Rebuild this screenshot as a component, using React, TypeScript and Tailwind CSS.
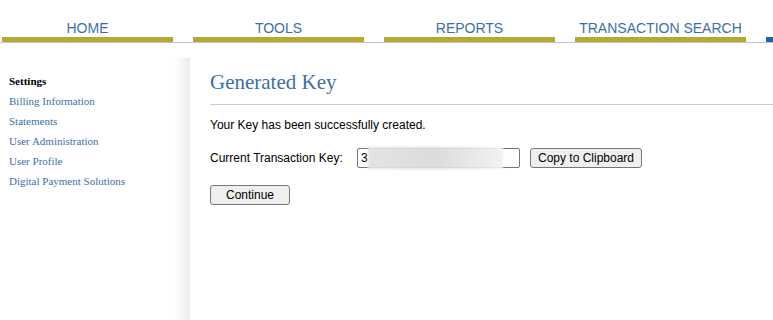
import React from 'react'

const tabs = ['HOME', 'TOOLS', 'REPORTS', 'TRANSACTION SEARCH']

const sideLinks = [
  'Billing Information',
  'Statements',
  'User Administration',
  'User Profile',
  'Digital Payment Solutions',
]

export default function App() {
  return (
    <div className="w-[773px] h-[320px] overflow-hidden bg-white font-['Liberation_Sans',Arial,sans-serif]">
      {/* top nav */}
      <div className="h-[58px]">
        <div className="flex gap-[20px] pl-[2px] pt-[19px] border-b border-[#c3c3cf]">
          {tabs.map((t) => (
            <div key={t} className="w-[171px] shrink-0">
              <div className="h-[18px] text-center text-[14px] leading-[18px] text-[#3d6fa8]">{t}</div>
              <div className="h-[5px] bg-[#b6a830]" />
            </div>
          ))}
          <div className="w-[171px] shrink-0 flex flex-col">
            <div className="h-[18px]" />
            <div className="h-[5px] bg-[#20689c]" />
          </div>
        </div>
      </div>

      <div className="flex">
        {/* sidebar */}
        <div className="relative w-[190px] h-[262px] shrink-0 bg-gradient-to-r from-white from-[92%] to-[#ececec] pl-[9px] pt-[15px] font-['Liberation_Serif',serif] text-[11px]">
          <div className="h-[20px] leading-[16px] font-bold text-black">Settings</div>
          {sideLinks.map((l) => (
            <div key={l} className="h-[20px] leading-[16px] text-[#3d6fa8]">{l}</div>
          ))}
        </div>

        {/* main */}
        <div className="flex-1 pl-[20px] pt-[10px]">
          <h1 className="font-['Liberation_Serif',serif] text-[21px] leading-[28px] text-[#3d6fa8] pb-[8px] border-b border-[#cccccc]">
            Generated Key
          </h1>
          <p className="mt-[12px] text-[12px] leading-[16px] text-black">Your Key has been successfully created.</p>
          <div className="mt-[15px] flex items-center text-[12px] text-black">
            <span className="w-[147px]">Current Transaction Key:</span>
            <div className="relative w-[163px] h-[20px] border border-[#767676] rounded-[2px] bg-white pl-[3px] leading-[18px] text-[12px]">
              3
              <div className="absolute left-[10px] top-[-2px] w-[135px] h-[22px] bg-gradient-to-r from-[#e4e4e4] via-[#dcdcdc] to-[#f2f2f2] blur-[1px]" />
            </div>
            <button className="ml-[10px] h-[20px] w-[112px] border border-[#767676] rounded-[3px] bg-[#efefef] text-[12px] leading-[18px] text-black">
              Copy to Clipboard
            </button>
          </div>
          <button className="mt-[17px] h-[20px] w-[80px] border border-[#767676] rounded-[3px] bg-[#efefef] text-[12px] leading-[18px] text-black">
            Continue
          </button>
        </div>
      </div>
    </div>
  )
}
